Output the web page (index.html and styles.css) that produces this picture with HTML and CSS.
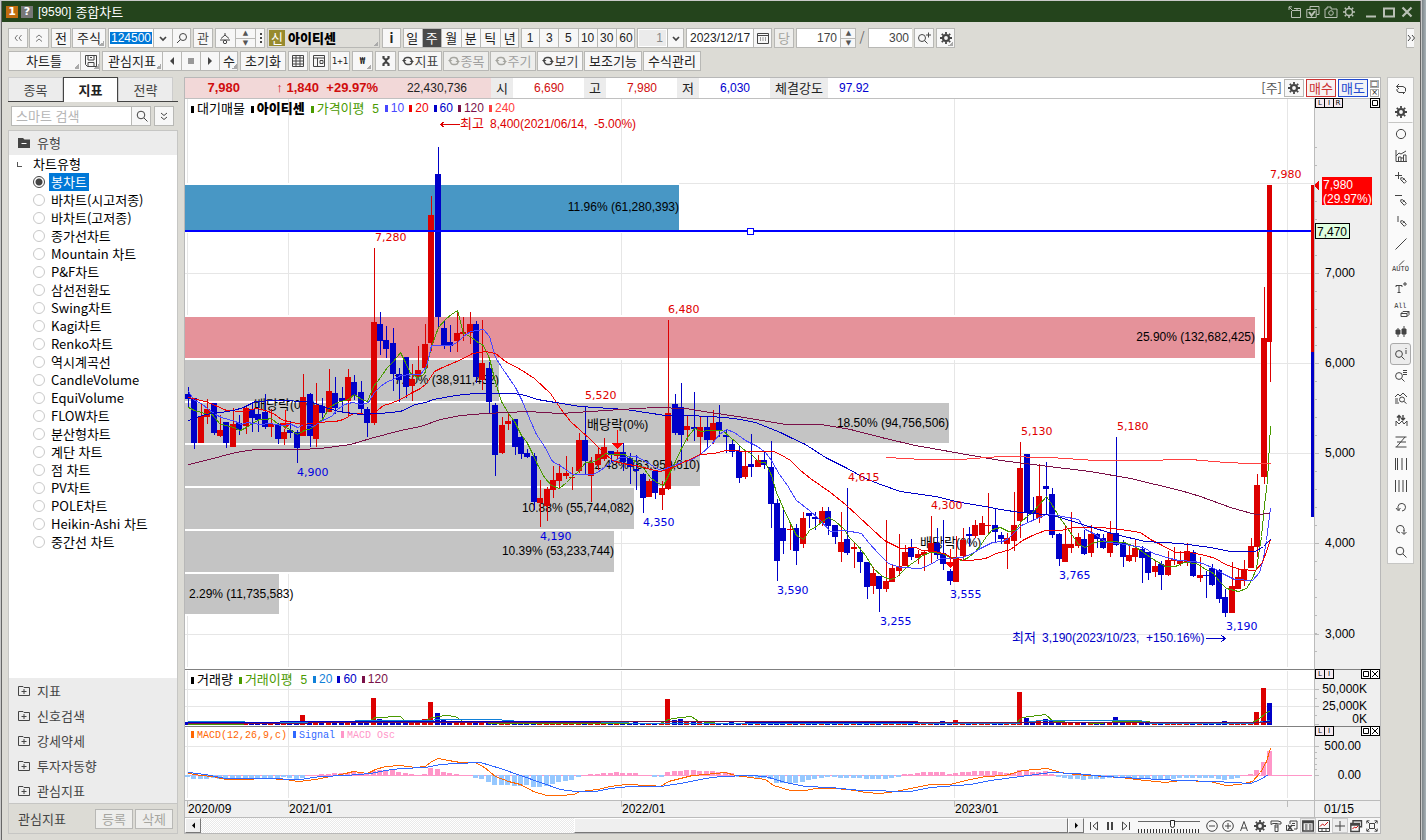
FILE: index.html
```html
<!DOCTYPE html>
<html lang="ko">
<head>
<meta charset="utf-8">
<title>[9590] 종합차트</title>
<link rel="stylesheet" href="styles.css">
</head>
<body>
<svg class="sprite" aria-hidden="true">
  <symbol id="gear" viewBox="0 0 12 12"><circle cx="6" cy="6" r="3" fill="none" stroke="currentColor" stroke-width="2.2"/><path d="M6 0v2M6 10v2M0 6h2M10 6h2M1.8 1.8l1.3 1.3M8.9 8.9l1.3 1.3M1.8 10.2l1.3-1.3M8.9 3.1l1.3-1.3" stroke="currentColor" stroke-width="1.8"/></symbol>
  <symbol id="gear-thin" viewBox="0 0 12 12"><circle cx="6" cy="6" r="3.5" fill="none" stroke="currentColor" stroke-width="1.4"/><path d="M6 0v2M6 10v2M0 6h2M10 6h2M1.8 1.8l1.3 1.3M8.9 8.9l1.3 1.3M1.8 10.2l1.3-1.3M8.9 3.1l1.3-1.3" stroke="currentColor" stroke-width="1.6"/></symbol>
  <symbol id="find" viewBox="0 0 12 12"><circle cx="5" cy="5" r="3.8"/><path d="M8 8l3.5 3.5"/></symbol>
  <symbol id="find-l" viewBox="0 0 12 12"><circle cx="7" cy="5" r="3.5"/><path d="M4.500 7.500L1 11"/></symbol>
  <symbol id="find-plus" viewBox="0 0 14 12"><circle cx="5" cy="6" r="3.500"/><path d="M7.500 8.500l3 3M9 3h5M11.500 .5v5"/></symbol>
  <symbol id="down" viewBox="0 0 12 12"><path d="M3 5l3 3 3-3" stroke-width="1.700"/></symbol>
  <symbol id="dleft" viewBox="0 0 12 12"><path d="M5.500 3L3 6l2.500 3M9.500 3L7 6l2.500 3"/></symbol>
  <symbol id="dright" viewBox="0 0 12 12"><path d="M3 3l2.500 3L3 9M7 3l2.500 3L7 9"/></symbol>
  <symbol id="dup" viewBox="0 0 12 12"><path d="M3 5.500L6 3l3 2.500M3 9.500L6 7l3 2.500"/></symbol>
  <symbol id="ddown" viewBox="0 0 12 12"><path d="M3 3l3 2.500L9 3M3 7l3 2.500L9 7"/></symbol>
  <symbol id="sync" viewBox="0 0 12 12"><path d="M2 6V4.500a3 3 0 0 1 3-2h1.500a3 3 0 0 1 3 2.500M10 6v1.500a3 3 0 0 1-3 2H5.500a3 3 0 0 1-3-2.500" stroke-width="1.500"/><path d="M0 5h4.500L2 7.500zM7.500 7H12L9.800 4.500z" fill="currentColor" stroke="none"/></symbol>
  <symbol id="save" viewBox="0 0 12 12"><path d="M.5 .5h11v11H2.500l-2-2zM3 .5v4.500h6V.5M3 11.500V7.500h6v4M5 2.500h2"/></symbol>
  <symbol id="grid" viewBox="0 0 12 12"><path d="M.5 .5h11v11H.5zM.5 3h11M.5 6h11M.5 9h11M4 .5v11M8 .5v11"/></symbol>
  <symbol id="layout" viewBox="0 0 12 12"><path d="M.5 .5h11v11H.5zM.5 3h11M4.500 3v8.500M7 5.500h3v3H7z"/></symbol>
  <symbol id="left" viewBox="0 0 12 12"><path d="M8 2v8L4 6z" fill="currentColor" stroke="none"/></symbol>
  <symbol id="right" viewBox="0 0 12 12"><path d="M4 2v8l4-4z" fill="currentColor" stroke="none"/></symbol>
  <symbol id="stop" viewBox="0 0 12 12"><path d="M3 3h6v6H3z" fill="currentColor" stroke="none"/></symbol>
  <symbol id="calendar" viewBox="0 0 12 12"><path d="M.5 1.500h11v10H.5zM.5 3.500h11M3 6h1M5.500 6h1M8 6h1M3 8h1M5.500 8h1M8 8h1"/></symbol>
  <symbol id="tool" viewBox="0 0 12 12"><path d="M3.500 1v2l2.500 2 2.500-2V1M6 5v2M3.500 11V9L6 7l2.500 2v2" stroke-width="2.200"/></symbol>
  <symbol id="folder-plus" viewBox="0 0 12 12"><path d="M.5 10.500V1.500H5l1 1h5.500v8zM3.500 6.500h5M6 4v5"/></symbol>
  <symbol id="folder-minus" viewBox="0 0 12 12"><path d="M0 1h5l1.500 1.500H12V11H0z" fill="currentColor" stroke="none"/><path d="M3.500 6.500h5" stroke="#fff"/></symbol>
  <symbol id="person" viewBox="0 0 12 12"><path d="M6 1v2L2 6.500M6 3l4 3.500M1 8h10"/><circle cx="6" cy="10" r="1.700"/></symbol>
  <symbol id="pencil" viewBox="0 0 7 7"><path d="M.8.8h2l3.500 3.500-2 2L.8 2.800zM2.500 3l2-1.500"/></symbol>
</svg>

<main class="window">
  <header class="titlebar">
    <span class="badge badge-num">1</span><button class="badge badge-help" type="button">?</button>
    <h1><span class="num">[9590]</span> 종합차트</h1>
    <div class="window-tools">
      <button type="button" aria-label="팝업"><svg class="ic" viewBox="0 0 14 12"><path d="M3.500 5v6.500h9V2.500H6M4 4.500h9M9 2.500v2M1 1l4 4M1 4V.8h3" /></svg></button>
      <button type="button" aria-label="묶음"><svg class="ic" viewBox="0 0 14 12"><path d="M4 3V.5h9v8h-2.500M.8 3.500h9.400v8H.8z"/><path d="M3 6l2.500 3.500L9 5" stroke-width="2"/></svg></button>
      <button type="button" aria-label="캡처"><svg class="ic" viewBox="0 0 14 12"><path d="M1 3h2V1h4v2h6v8.500H1z"/><circle cx="7" cy="7" r="2.300"/></svg></button>
      <button type="button" aria-label="설정"><svg class="ic"><use href="#gear-thin"/></svg></button>
      <button type="button" aria-label="최소화"><svg class="ic" viewBox="0 0 12 12"><path d="M1 10.500h10" stroke-width="2"/></svg></button>
      <button type="button" aria-label="최대화"><svg class="ic" viewBox="0 0 12 12"><path d="M1 2.500h10v8H1z" stroke-width="2"/></svg></button>
      <button type="button" aria-label="닫기"><svg class="ic" viewBox="0 0 12 12"><path d="M1.500 1.500l9 9M10.500 1.500l-9 9" stroke-width="2.200"/></svg></button>
    </div>
  </header>

  <div class="toolbars">
    <div class="toolbar">
      <div class="spaced"><button class="btn w20" type="button" aria-label="처음"><svg class="ic dim"><use href="#dleft"/></svg></button><button class="btn w20" type="button" aria-label="접기"><svg class="ic dim"><use href="#dup"/></svg></button></div>
      <div class="spaced"><button class="btn w20" type="button">전</button><button class="btn w34 drop" type="button">주식</button></div>
      <div class="group"><input class="w45 num code" type="text" value="124500" aria-label="종목코드"><button class="w19" type="button" aria-label="목록"><svg class="ic"><use href="#down"/></svg></button><button class="w19" type="button" aria-label="종목검색"><svg class="ic"><use href="#find-l"/></svg></button></div>
      <button class="btn w20 soft" type="button">관</button>
      <div class="group"><button class="w20" type="button" aria-label="그룹"><svg class="ic"><use href="#person"/></svg></button><span class="spin w20"><button type="button" aria-label="이전 종목">▲</button><button type="button" aria-label="다음 종목">▼</button></span><button class="w10" type="button" aria-label="더보기"><svg class="ic" viewBox="0 0 12 12"><path d="M6 1v2M6 5v2M6 9v2" stroke-width="2"/></svg></button></div>
      <button class="stock drop" type="button"><span class="tag">신</span><b>아이티센</b></button>
      <button class="btn w19" type="button"><b>i</b></button>
      <div class="group even period"><button type="button">일</button><button class="on" type="button">주</button><button type="button">월</button><button type="button">분</button><button type="button">틱</button><button type="button">년</button></div>
      <div class="group even minutes num"><button type="button">1</button><button type="button">3</button><button type="button">5</button><button type="button">10</button><button type="button">30</button><button type="button">60</button></div>
      <div class="group"><input class="w30 num end off" type="text" value="1" aria-label="주기값"><button class="w17" type="button" aria-label="주기 목록"><svg class="ic"><use href="#down"/></svg></button></div>
      <div class="group"><input class="w67 num" type="text" value="2023/12/17" aria-label="날짜"><button class="w19" type="button" aria-label="달력"><svg class="ic"><use href="#calendar"/></svg></button></div>
      <button class="btn w20 flat" type="button">당</button>
      <div class="group"><input class="w44 num end" type="text" value="170" aria-label="표시 봉 수"><span class="spin w16"><button type="button" aria-label="증가">▲</button><button type="button" aria-label="감소">▼</button></span></div>
      <span class="slash">/</span>
      <div class="group"><input class="w44 num end" type="text" value="300" aria-label="전체 봉 수"></div>
      <button class="btn w20" type="button" aria-label="확대"><svg class="ic wide" viewBox="0 0 14 12"><use href="#find-plus"/></svg></button>
      <button class="btn w19 drop" type="button" aria-label="설정"><svg class="ic"><use href="#gear"/></svg></button>
      <button class="btn more" type="button" aria-label="더보기"><svg class="ic"><use href="#dright"/></svg></button>
    </div>
    <div class="toolbar">
      <div class="group"><button class="w72 drop" type="button">차트틀</button><button class="w20 drop" type="button" aria-label="저장"><svg class="ic"><use href="#save"/></svg></button></div>
      <div class="group"><button class="w60 drop" type="button">관심지표</button><button class="w19" type="button" aria-label="이전"><svg class="ic"><use href="#left"/></svg></button><button class="w19" type="button" aria-label="정지"><svg class="ic faded"><use href="#stop"/></svg></button><button class="w19" type="button" aria-label="다음"><svg class="ic"><use href="#right"/></svg></button><button class="w19 drop" type="button">수</button></div>
      <button class="btn w46" type="button">초기화</button>
      <div class="spaced"><button class="btn w20" type="button" aria-label="표"><svg class="ic"><use href="#grid"/></svg></button><button class="btn w20" type="button" aria-label="배치"><svg class="ic"><use href="#layout"/></svg></button><button class="btn w20 tiny" type="button">1+1</button></div>
      <button class="btn w21 drop tiny" type="button"><b>₩</b></button>
      <button class="btn w21" type="button" aria-label="도구"><svg class="ic"><use href="#tool"/></svg></button>
      <div class="spaced"><button class="btn w45 sync" type="button"><svg class="ic"><use href="#sync"/></svg>지표</button><button class="btn w46 sync flat" type="button"><svg class="ic"><use href="#sync"/></svg>종목</button><button class="btn w46 sync flat" type="button"><svg class="ic"><use href="#sync"/></svg>주기</button><button class="btn w46 sync" type="button"><svg class="ic"><use href="#sync"/></svg>보기</button><button class="btn w58" type="button">보조기능</button><button class="btn w58" type="button">수식관리</button></div>
    </div>
  </div>

  <div class="workspace">
    <aside class="sidebar">
      <nav class="tabs"><button type="button">종목</button><button class="active" type="button">지표</button><button type="button">전략</button></nav>
      <div class="search"><div class="group"><input type="text" placeholder="스마트 검색" aria-label="스마트 검색"><button class="w20" type="button" aria-label="검색"><svg class="ic"><use href="#find"/></svg></button></div><button class="btn w20" type="button" aria-label="펼치기"><svg class="ic"><use href="#ddown"/></svg></button></div>
      <div class="panel">
        <button class="section head" type="button"><svg class="ic"><use href="#folder-minus"/></svg>유형</button>
        <fieldset class="types">
          <legend><i class="elbow"></i>차트유형</legend>
          <label><input type="radio" name="type" checked><span>봉차트</span></label>
          <label><input type="radio" name="type"><span>바차트(시고저종)</span></label>
          <label><input type="radio" name="type"><span>바차트(고저종)</span></label>
          <label><input type="radio" name="type"><span>종가선차트</span></label>
          <label><input type="radio" name="type"><span>Mountain 차트</span></label>
          <label><input type="radio" name="type"><span>P&amp;F차트</span></label>
          <label><input type="radio" name="type"><span>삼선전환도</span></label>
          <label><input type="radio" name="type"><span>Swing차트</span></label>
          <label><input type="radio" name="type"><span>Kagi차트</span></label>
          <label><input type="radio" name="type"><span>Renko차트</span></label>
          <label><input type="radio" name="type"><span>역시계곡선</span></label>
          <label><input type="radio" name="type"><span>CandleVolume</span></label>
          <label><input type="radio" name="type"><span>EquiVolume</span></label>
          <label><input type="radio" name="type"><span>FLOW차트</span></label>
          <label><input type="radio" name="type"><span>분산형차트</span></label>
          <label><input type="radio" name="type"><span>계단 차트</span></label>
          <label><input type="radio" name="type"><span>점 차트</span></label>
          <label><input type="radio" name="type"><span>PV차트</span></label>
          <label><input type="radio" name="type"><span>POLE차트</span></label>
          <label><input type="radio" name="type"><span>Heikin-Ashi 차트</span></label>
          <label><input type="radio" name="type"><span>중간선 차트</span></label>
        </fieldset>
        <button class="section" type="button"><svg class="ic"><use href="#folder-plus"/></svg>지표</button>
        <button class="section" type="button"><svg class="ic"><use href="#folder-plus"/></svg>신호검색</button>
        <button class="section" type="button"><svg class="ic"><use href="#folder-plus"/></svg>강세약세</button>
        <button class="section" type="button"><svg class="ic"><use href="#folder-plus"/></svg>투자자동향</button>
        <button class="section" type="button"><svg class="ic"><use href="#folder-plus"/></svg>관심지표</button>
        <footer class="favorites"><span>관심지표</span><button class="btn flat" type="button">등록</button><button class="btn flat" type="button">삭제</button></footer>
      </div>
    </aside>

    <section class="chart">
      <div class="quote">
        <div class="now num"><b>7,980</b><b>↑ 1,840</b><b>+29.97%</b><span>22,430,736</span></div>
        <span class="key">시</span><span class="val up num">6,690</span>
        <span class="key">고</span><span class="val up num">7,980</span>
        <span class="key">저</span><span class="val dn num">6,030</span>
        <span class="key wide">체결강도</span><span class="val dn num">97.92</span>
        <span class="unit">[주]</span>
        <button class="btn w20" type="button" aria-label="설정"><svg class="ic"><use href="#gear"/></svg></button>
        <button class="trade buy" type="button">매수</button><button class="trade sell" type="button">매도</button>
        <span class="mini"><button type="button" aria-label="확대">□</button><button type="button" aria-label="닫기">×</button></span>
      </div>
      <div class="pane price">
        <div class="plot"><svg id="price"></svg>
          <div class="legend"><span class="k ko">대기매물</span><span class="k ko"><b>아이티센</b></span><span class="c5 ko">가격이평 <i>5</i></span><span class="c10">10</span><span class="c20">20</span><span class="c60">60</span><span class="c120">120</span><span class="c240">240</span></div>
        </div>
        <div class="axis"><svg id="price-axis"></svg><div class="caps"><button type="button">L</button><button type="button">I</button><button type="button">R</button></div><div class="caps end"><button type="button" aria-label="확대"><svg class="ic" viewBox="0 0 8 8"><path d="M1.500 1.500h5v5h-5z"/></svg></button></div></div>
      </div>
      <div class="pane volume">
        <div class="plot"><svg id="volume"></svg>
          <div class="legend"><span class="k ko">거래량</span><span class="c5 ko">거래이평 <i>5</i></span><span class="v20">20</span><span class="c60">60</span><span class="c120">120</span></div>
        </div>
        <div class="axis"><svg id="volume-axis"></svg><div class="caps"><button type="button">L</button><button type="button">I</button></div><div class="caps end"><button type="button" aria-label="확대"><svg class="ic" viewBox="0 0 8 8"><path d="M1.500 1.500h5v5h-5z"/></svg></button><button type="button" aria-label="닫기"><svg class="ic" viewBox="0 0 8 8"><path d="M1 1l6 6M7 1L1 7"/></svg></button></div></div>
      </div>
      <div class="pane macd">
        <div class="plot"><svg id="macd"></svg>
          <div class="legend"><span class="m1">MACD(12,26,9,c)</span><span class="m2">Signal</span><span class="m3">MACD Osc</span></div>
        </div>
        <div class="axis"><svg id="macd-axis"></svg><div class="caps"><button type="button">L</button><button type="button">I</button></div><div class="caps end"><button type="button" aria-label="확대"><svg class="ic" viewBox="0 0 8 8"><path d="M1.500 1.500h5v5h-5z"/></svg></button><button type="button" aria-label="닫기"><svg class="ic" viewBox="0 0 8 8"><path d="M1 1l6 6M7 1L1 7"/></svg></button></div></div>
      </div>
      <div class="pane dates"><div class="plot"><svg id="dates"></svg></div><div class="axis num">01/15</div></div>
      <div class="bottom">
        <div class="scroll"><button type="button" aria-label="왼쪽"><svg class="ic"><use href="#left"/></svg></button><div class="track"><div class="thumb"></div></div><button type="button" aria-label="오른쪽"><svg class="ic"><use href="#right"/></svg></button></div>
        <div class="player">
          <button type="button" aria-label="처음으로"><svg class="ic" viewBox="0 0 12 12"><path d="M2.500 2v8M9.500 2v8L5 6z"/></svg></button>
          <button type="button" aria-label="일시정지"><svg class="ic" viewBox="0 0 12 12"><path d="M4 2v8M8 2v8" stroke-width="2"/></svg></button>
          <button type="button" aria-label="끝으로"><svg class="ic" viewBox="0 0 12 12"><path d="M9.500 2v8M2.500 2v8L7 6z"/></svg></button>
        </div>
        <input class="speed" type="range" min="0" max="18" value="10" aria-label="속도">
        <div class="player">
          <button type="button" aria-label="축소"><svg class="ic" viewBox="0 0 12 12"><circle cx="6" cy="6" r="5.300"/><path d="M3 6h6"/></svg></button>
          <button type="button" aria-label="확대"><svg class="ic" viewBox="0 0 12 12"><circle cx="6" cy="6" r="5.300"/><path d="M3 6h6M6 3v6"/></svg></button>
          <button type="button" aria-label="글자"><svg class="ic" viewBox="0 0 12 12"><path d="M2.500 11L6 1.500 9.500 11M3.500 8h5"/></svg></button>
          <button type="button" aria-label="설정"><svg class="ic"><use href="#gear"/></svg></button>
          <button type="button" aria-label="도구"><svg class="ic" viewBox="0 0 12 12"><path d="M1 1h7l3 1v2H8L7 3.500H3L1 4.500zM5 5h3v2H5zM5 7v4.500h3V7"/></svg></button>
          <button type="button" aria-label="편집"><svg class="ic" viewBox="0 0 12 12"><path d="M4 4V1h7v8H8M6 3.500h3M6 5.500h3M.5 5v5.500h7"/><path d="M2 5l4 5M6 5l-4 5" stroke-width="1.600"/></svg></button>
          <button class="on" type="button" aria-label="정보"><svg class="ic" viewBox="0 0 12 12"><path d="M.8 1h10.500v10H.8zM1 2.500h10" stroke-width="1.500"/><path d="M3 5h2.500M3 7h2.500M3 9h2.500M7 5h2.500M7 7h2.500M7 9h2.500"/></svg></button>
          <button type="button" aria-label="차트"><svg class="ic" viewBox="0 0 12 12"><path d="M.5 .5h11v11H.5z"/><path d="M2 6.500L4.500 4l2 1.500L10 2" stroke="#c11"/><path d="M.5 8.500h11M4 8.500v3M8 8.500v3"/></svg></button>
          <button class="on" type="button" aria-label="십자선"><svg class="ic" viewBox="0 0 12 12"><path d="M6 1v10M1 6h10"/></svg></button>
          <button type="button" aria-label="복사"><svg class="ic" viewBox="0 0 12 12"><path d="M3 3V.8h8.500v6H9M.8 3.500h8.500v8H.8zM1 5h8" stroke-width="1.400"/><path d="M2.500 9l2-2 1.500 1 2-2" stroke="#c11"/></svg></button>
          <button type="button" aria-label="전체화면"><svg class="ic" viewBox="0 0 12 12"><path d="M.8 3.500V.8h2.700M8.500.8h2.700v2.700M11.200 8.500v2.700H8.500M3.500 11.200H.8V8.500M3.500 3.500h5v5h-5zM1 1l2.500 2.500M11 1L8.500 3.500M1 11l2.500-2.500M11 11L8.500 8.500"/></svg></button>
        </div>
      </div>
    </section>

    <aside class="drawbar">
      <button type="button" aria-label="전환"><svg class="ic" viewBox="0 0 12 12"><path d="M4 1L1.500 3.500 4 6M1.500 3.500H8l2.500 1.500v3M8 11l2.500-2.500M2 6v2l2 1.500h6"/></svg></button>
      <button class="last" type="button" aria-label="설정"><svg class="ic"><use href="#gear"/></svg></button>
      <button type="button" aria-label="원"><svg class="ic" viewBox="0 0 12 12"><circle cx="6" cy="6" r="4.600"/></svg></button>
      <button type="button" aria-label="분석"><svg class="ic" viewBox="0 0 12 12"><path d="M1 0v11.500h11M1 6l3-3 2 1 5-3M3.500 11V7H6v4M6 8h2.500v3M8.500 11V5H11v6"/></svg></button>
      <button type="button" aria-label="십자 그리기"><svg class="ic" viewBox="0 0 12 12"><path d="M0 3.500h7M3.500 0v7"/><use href="#pencil" x="5" y="5" width="7" height="7"/></svg></button>
      <button type="button" aria-label="수평선"><svg class="ic" viewBox="0 0 12 12"><path d="M0 1.500h7"/><use href="#pencil" x="5" y="5" width="7" height="7"/></svg></button>
      <button type="button" aria-label="수직선"><svg class="ic" viewBox="0 0 12 12"><path d="M3 0v6"/><use href="#pencil" x="5" y="4" width="7" height="7"/></svg></button>
      <button type="button" aria-label="추세선"><svg class="ic" viewBox="0 0 12 12"><path d="M.5 11.500l11-11"/></svg></button>
      <button class="auto" type="button"><svg class="ic" viewBox="0 0 12 5"><path d="M4 5l5-5"/></svg>AUTO</button>
      <button type="button" aria-label="글자"><svg class="ic" viewBox="0 0 12 12"><path d="M1 5V3.500h6V5M4 3.500v7M2.500 10.500h3M8 2h4M10 0v4"/></svg></button>
      <button class="auto all" type="button">All<svg class="ic" viewBox="0 0 12 7"><path d="M3 3l2-2h6v3L9 6H3zM3 3h6v3M9 3l2-2"/></svg></button>
      <button type="button" aria-label="봉"><svg class="ic" viewBox="0 0 12 12"><path d="M1 4h4v4H1zM7 3h4v5H7z" fill="currentColor"/><path d="M3 2v9M9 0v11"/></svg></button>
      <button class="on" type="button" aria-label="정보 조회"><svg class="ic" viewBox="0 0 12 12"><circle cx="4" cy="6" r="3.400"/><path d="M6.500 8.500l3 3M11 0v1M11 2v4"/></svg></button>
      <button type="button" aria-label="목록 조회"><svg class="ic" viewBox="0 0 12 12"><circle cx="4" cy="6" r="3.400"/><path d="M6.500 8.500l3 3M8 .5h4M8 2.500h4M8 4.500h4"/></svg></button>
      <button type="button" aria-label="패턴"><svg class="ic" viewBox="0 0 12 12"><path d="M0 5l3-3 2 2 3-3 4 4M0 7h3M0 9h3M0 11h4"/><circle cx="7" cy="7.500" r="2.500"/><path d="M9 9.500l2.500 2"/></svg></button>
      <button type="button" aria-label="매매 신호"><svg class="ic" viewBox="0 0 12 12"><path d="M1 12V7l3 3 3-3 2 3 3-3v5"/><path d="M4 7V2M2 3.500L4 1.500l2 2M8 1v5M6 4l2 2 2-2" stroke-width="1.400"/></svg></button>
      <button type="button" aria-label="피보나치"><svg class="ic" viewBox="0 0 12 12"><path d="M.5 1h11M2 6h9M.5 11h11M10 1L1.500 11"/></svg></button>
      <button type="button" aria-label="시간대"><svg class="ic" viewBox="0 0 12 12"><path d="M.5 0v12M2.500 0v12M7 0v12M11.500 0v12"/></svg></button>
      <button type="button" aria-label="등간격"><svg class="ic" viewBox="0 0 12 12"><path d="M.5 0v12M4 0v12M8 0v12M11.500 0v12"/></svg></button>
      <button type="button" aria-label="되돌리기"><svg class="ic" viewBox="0 0 12 12"><path d="M3 7V4.500a3.800 3.800 0 1 1 4 4.500M1 6l2 2.500L5.500 6M3 8h2"/></svg></button>
      <button type="button" aria-label="다시하기"><svg class="ic" viewBox="0 0 12 12"><path d="M9 7V4.500A3.800 3.800 0 1 0 5 9M6.500 8L9 10.500 11.500 8M9 6v4"/></svg></button>
      <button type="button" aria-label="돋보기"><svg class="ic"><use href="#find"/></svg></button>
    </aside>
  </div>
</main>
<script src="chart.js"></script>
</body>
</html>
```

FILE: styles.css
```css
* { box-sizing: border-box; }
body { margin: 0; padding: 1px 5px 0 1px; min-height: 100vh; display: flex; background: linear-gradient(90deg, #c9c9c9, #c9c9c9 calc(100% - 4px), #7b8387 calc(100% - 4px), #a9b3b8); font: 13px/18px "Noto Sans CJK KR", "Liberation Sans", sans-serif; color: #222; }
button, input { font: inherit; color: inherit; margin: 0; padding: 0; border: 0; background: none; border-radius: 0; min-width: 0; }
button { display: flex; align-items: center; justify-content: center; white-space: nowrap; }
.sprite { position: absolute; width: 0; height: 0; }
.num { font-family: "Liberation Sans", sans-serif; font-size: 12px; }
.ic { width: 12px; height: 12px; flex: none; fill: none; stroke: currentColor; stroke-width: 1; color: #444; overflow: visible; }
.ic.wide { width: 14px; }
.ic.dim { color: #777; }
.ic.faded { color: #999; }
.window { flex: 1; min-width: 0; display: flex; flex-direction: column; background: #dcdbd5; border-left: 1px solid #666; border-right: 1px solid #666; }

.titlebar { height: 21px; display: flex; align-items: center; padding: 0 6px 0 4px; background: #24441c; color: #fff; }
.titlebar h1 { margin: 0 0 0 2px; font-size: 13px; line-height: 18px; font-weight: 400; display: flex; gap: 4px; }
.badge { width: 12px; height: 12px; margin-right: 3px; font: bold 11px/12px "DejaVu Sans", sans-serif; text-align: center; background: #c16c10; color: #fff; }
.badge-help { background: #777; }
.window-tools { margin-left: auto; display: flex; gap: 4px; }
.window-tools .ic { color: #b9c0b5; width: 14px; }
.window-tools button:nth-child(5) { margin-left: 4px; }

.toolbars { padding: 6px; display: flex; flex-direction: column; gap: 3px; }
.toolbar { display: flex; gap: 2px; height: 20px; }
.spaced { display: flex; gap: 1px; }
.btn, .group { border: 1px solid #b8b8b5; background: #f7f7f7; height: 20px; flex: none; }
.group { display: flex; }
.group > * { border-left: 1px solid #b8b8b5; height: 18px; flex: none; }
.group > :first-child { border-left: 0; margin-left: -1px; }
.group > :last-child { margin-right: -1px; }
.group > input { background: #fff; padding: 0 3px; }
.group > input:first-child { margin-left: 0; }
.drop { background-image: linear-gradient(135deg, transparent 50%, #aaa 50%); background-size: 5px 5px; background-position: right 1px bottom 1px; background-repeat: no-repeat; }
.w10 { width: 10px; } .w16 { width: 16px; } .w17 { width: 17px; } .w19 { width: 19px; } .w20 { width: 20px; } .w21 { width: 21px; }
.w30 { width: 29px; } .w34 { width: 34px; } .w44 { width: 43px; } .w45 { width: 44px; } .w46 { width: 46px; } .w58 { width: 58px; }
.w60 { width: 60px; } .w67 { width: 66px; } .w72 { width: 72px; }
.group .code { padding: 0 0 0 2px; color: #fff; background: linear-gradient(#0078d7, #0078d7) 1px 3px / 42px 12px no-repeat #fff; }
.end { text-align: right; color: #444; }
.group .off { background: #ebebeb; color: #888; border: 1px solid #fff; }
.even > * { flex: 1; }
.period { width: 116px; }
.minutes { width: 114px; }
.on { background: #4a4a4a; color: #fff; }
.soft { color: #555; }
.flat { color: #a5a59f; background: #eeeeec; }
.flat .ic { color: #a5a59f; }
.tiny { font-family: "DejaVu Sans Mono", monospace; font-size: 9px; }
.sync .ic { margin-right: 1px; width: 12px; }
.sync { color: #444; }
.sync.flat { color: #a0a0a0; }
.spin { display: flex; flex-direction: column; }
.spin button { flex: 1; font: 7px/8px "DejaVu Sans", sans-serif; color: #555; }
.spin button + button { border-top: 1px solid #b8b8b5; }
.stock { width: 113px; justify-content: flex-start; gap: 3px; background-color: #dfded9; border: 1px solid #b8b8b5; padding-left: 1px; }
.stock b { font-weight: 900; color: #000; }
.tag { width: 16px; height: 16px; line-height: 16px; background: #978a2e; color: #fff; }
.slash { width: 8px; text-align: center; color: #666; }
.more { width: 8px; margin-left: auto; border-right: 0; }

.workspace { flex: 1; display: flex; padding: 0 6px 6px 6px; min-height: 0; }
.sidebar { width: 170px; flex: none; display: flex; flex-direction: column; }
.tabs { display: flex; height: 25px; border-bottom: 1px solid #444; padding-right: 5px; }
.tabs button { flex: 1; background: #ececec; border: 1px solid #ccc; border-bottom: 0; color: #444; height: 24px; }
.tabs .active { background: #fff; border-color: #444; font-weight: 700; color: #222; height: 25px; }
.search { display: flex; gap: 3px; padding: 4px 4px 4px 3px; }
.search .group { flex: 1; min-width: 0; }
.search .group input { flex: 1; width: 0; padding: 0 4px; }
.search input::placeholder { color: #b5b5b5; }
.panel { flex: 1; display: flex; flex-direction: column; border: 1px solid #c6c6c4; background: #fff; }
.section { height: 25px; flex: none; justify-content: flex-start; gap: 7px; padding-left: 9px; background: #ececec; color: #444; }
.head { height: 24px; }
.types { flex: 1; border: 0; margin: 0; padding: 0 0 0 24px; min-width: 0; color: #000; }
.types legend { padding: 0; display: flex; line-height: 18px; align-items: center; }
.elbow { width: 5px; height: 5px; margin: 0 11px 0 -16px; border-left: 1px solid #555; border-bottom: 1px solid #555; }
.types label { display: flex; align-items: center; gap: 4px; height: 18px; }
.types span { padding: 0 2px; line-height: 18px; }
.types input { appearance: none; width: 12px; height: 12px; border: 1px solid #c8c8c8; border-radius: 50%; }
.types input:checked { border-color: #444; background: radial-gradient(#444 0 3px, #fff 4px); }
.types input:checked + span { background: #0078d7; color: #fff; }
.favorites { height: 30px; display: flex; align-items: center; gap: 2px; padding: 0 4px 0 9px; border-top: 1px solid #c6c6c4; background: #dcdbd5; color: #444; }
.favorites span { margin-right: auto; }
.favorites .btn { width: 38px; }

.chart { flex: 1; min-width: 0; margin-left: 6px; display: flex; flex-direction: column; border: 1px solid #b8b8b8; background: #fff; }
.quote { height: 21px; display: flex; align-items: center; gap: 2px; border-bottom: 1px solid #c0c0c0; line-height: 20px; }
.now { width: 306px; display: grid; grid-template-columns: 55px 79px 59px 89px; background: #f2d8d8; text-align: right; }
.now b { color: #d00d0d; font-size: 13px; }
.key { width: 22px; margin-left: -2px; background: #ececec; text-align: center; }
.key.wide { width: 58px; }
.val { width: 71px; margin-left: -2px; padding-right: 20px; text-align: right; }
.key.wide + .val { padding-right: 30px; }
.up { color: #d00d0d; }
.dn { color: #0000d0; }
.unit { margin-left: auto; color: #555; }
.quote .btn { height: 18px; }
.trade { width: 30px; height: 18px; border: 1px solid #c33; color: #c33; background: #f7f2f2; }
.sell { border-color: #2149cf; color: #2149cf; background: #f2f3f7; }
.mini { width: 9px; display: flex; flex-direction: column; gap: 1px; margin-right: 1px; }
.mini button { height: 8px; border: 1px solid #aaa; font: 8px/6px "DejaVu Sans", sans-serif; }
.pane { display: flex; border-top: 1px solid #808080; }
.price { flex: 1; border-top: 0; min-height: 0; }
.volume { height: 57px; }
.macd { height: 74px; }
.dates { height: 17px; border-color: #bbb; background: #efefef; }
.plot { flex: 1; min-width: 0; position: relative; }
.plot > svg, .axis > svg { display: block; width: 100%; height: 100%; shape-rendering: crispEdges; overflow: hidden; }
.axis { width: 66px; flex: none; position: relative; background: #efefef; border-left: 1px solid #bbb; }
.dates .axis { padding-left: 9px; line-height: 17px; color: #000; }
svg text { font: 12px "Liberation Sans", sans-serif; white-space: pre; }
svg .ko { font: 13px "Noto Sans CJK KR", sans-serif; }
svg .mark { font: 11px "DejaVu Sans", sans-serif; }
.legend { position: absolute; top: 0; left: 6px; display: flex; gap: 5px; font: 12px/18px "Liberation Sans", sans-serif; }
.legend span::before { content: ""; display: inline-block; width: 3px; height: 7px; margin-right: 3px; background: currentColor; }
.legend .ko { font-family: "Noto Sans CJK KR", sans-serif; font-size: 13px; margin-right: 1px; }
.legend b { font-weight: 900; }
.legend i { font: 12px "Liberation Sans", sans-serif; margin-left: 4px; }
.k { color: #000; } .c5 { color: #4a9a00; } .c10 { color: #4848ff; } .c20 { color: #f00000; } .c60 { color: #0000c8; }
.c120 { color: #7a1048; } .c240 { color: #ff4040; } .v20 { color: #1080d8; } .m1 { color: #ff6600; } .m2 { color: #2f68ff; } .m3 { color: #ff96c8; }
.macd .legend { font-family: "Liberation Mono", monospace; font-size: 10px; gap: 6px; }
.caps { position: absolute; top: -1px; left: 0; display: flex; }
.caps.end { left: auto; right: 0; }
.caps button { width: 10px; height: 10px; border: 1px solid #000; margin-right: -1px; font: 7px/8px "DejaVu Sans", sans-serif; color: #000; background: #f6eaf0; }
.caps.end button { margin-right: 0; margin-left: -1px; background: #fff; }
.caps .ic { width: 8px; height: 8px; color: #000; }

.bottom { height: 16px; display: flex; border-top: 1px solid #bbb; background: #f7f7f7; }
.scroll { flex: 1; display: flex; }
.scroll button, .thumb { background: #efefef; border: 1px solid; border-color: #fff #777 #777 #fff; }
.scroll button { width: 16px; }
.scroll .ic { color: #000; width: 9px; height: 9px; }
.track { flex: 1; background: repeating-conic-gradient(#fff 0 25%, #e9e9e9 0 50%) 0 0 / 2px 2px; display: flex; justify-content: flex-end; }
.thumb { width: 57%; }
.player { display: flex; margin-left: 2px; }
.player button { width: 16px; }
.player .on { background: #eee; outline: 1px solid #ccc; outline-offset: -1px; }
.speed { appearance: none; width: 62px; margin: 0 2px 0 4px; background: linear-gradient(#666, #666) 0 3px / 100% 1px no-repeat, repeating-linear-gradient(90deg, #333 0 1px, transparent 1px 3px) 0 100% / 100% 4px no-repeat; }
.speed::-webkit-slider-thumb { appearance: none; width: 5px; height: 8px; margin-bottom: 4px; border: 1px solid #222; background: #fff; border-radius: 0 0 3px 3px; }

.drawbar { width: 27px; flex: none; align-self: flex-start; margin-left: 6px; border: 1px solid #c6c6c4; background: #fafafa; display: flex; flex-direction: column; }
.drawbar button { height: 22px; border: 1px solid transparent; }
.drawbar .last { border-bottom-color: #c6c6c4; height: 23px; }
.drawbar .on { margin: 0 2px; border: 1px solid #aaa; border-radius: 3px; background: #ececec; }
.auto { flex-direction: column; font: 7px/7px "DejaVu Sans Mono", monospace; color: #333; }
.auto .ic { height: 6px; }
.all .ic { margin-left: 6px; height: 8px; }
```

FILE: chart.js
```js
// Plot coordinates are those of the whole window; each pane shifts them by its own origin.
const NS = 'http://www.w3.org/2000/svg';
const RED = '#dc0000', BLUE = '#0000c8', GRID = '#e6e6e6';
const pane = (id, x, y) => {
  const g = document.createElementNS(NS, 'g');
  g.setAttribute('transform', `translate(${-x} ${-y})`);
  document.getElementById(id).append(g);
  return g;
};
const add = (g, tag, attrs, text) => {
  const e = document.createElementNS(NS, tag);
  for (const k in attrs) e.setAttribute(k, attrs[k]);
  if (text) e.textContent = text;
  g.append(e);
};
const box = (g, x, y, width, height, fill) => add(g, 'rect', { x, y, width, height, fill });
const line = (g, points, stroke) => add(g, 'polyline', { points, stroke, fill: 'none', transform: 'translate(.5 .5)' });
const text = (g, x, y, s, fill = '#000', anchor = 'start', cls = '') => add(g, 'text', { x, y, fill, 'text-anchor': anchor, class: cls }, s);
const barX = i => Math.round(188 + i * 6.402);
const YEARS = [187, 288, 621, 954, 1287];

// colour, high, body top, body bottom, low
const candles = `B387 394 399 408,B398 398 443 449,R404 416 443 443,R399 409 417 424,B403 403 433 435,R415 430 436 437,B422 422 443 448,R408 424 447 447,B415 423 430 435,R405 408 426 434
B402 409 418 432,B402 414 420 432,B394 412 427 429,R409 424 427 437,B423 424 439 444,R429 432 439 445,B421 430 433 438,B430 432 448 463,R374 397 436 436,B393 394 436 447
R383 405 439 447,B398 406 413 418,R369 391 412 412,B377 393 408 414,B387 398 401 412,R369 377 401 416,B375 382 396 400,B381 392 409 415,B407 409 423 437,R248 322 423 425
B312 324 341 355,B326 340 349 358,B328 343 374 391,B368 374 380 402,B357 357 387 398,R364 379 386 401,R346 370 377 378,R324 344 368 373,R196 215 343 351,B147 174 317 328
B320 328 345 349,B325 342 346 352,R313 333 341 352,R317 332 334 341,R312 324 333 344,B321 324 377 383,R320 363 380 390,B362 368 402 414,B403 405 455 476,R417 425 453 454
R412 421 424 430,B419 419 447 455,B435 437 454 459,B449 453 457 458,B453 456 502 510,R480 498 503 527,R487 489 506 521,R466 480 490 498,R464 473 481 488,R456 473 476 479
R467 477 478 490,R433 440 471 473,B406 440 461 474,R457 463 476 502,R447 454 465 470,R438 447 459 461,B451 451 455 462,R450 452 456 459,B443 452 462 471,B453 458 467 484
B455 469 471 490,B473 474 498 513,R479 481 497 497,B471 471 493 499,R481 488 495 510,R320 413 489 490,B394 404 433 435,B383 407 435 460,R416 426 430 441,B392 427 429 441
R416 427 437 455,B417 427 440 448,R410 423 440 444,B405 422 430 437,B430 435 437 453,B440 444 452 457,B445 451 478 483,R452 466 477 479,B434 464 467 477,R455 460 467 467
B451 460 465 469,B441 467 504 528,B499 503 561 581,B508 528 541 554,R525 529 530 550,B524 528 551 565,R512 518 544 548,B513 513 516 528,B512 517 519 530,R507 511 523 526
B507 511 526 535,B525 525 537 544,R512 542 552 562,B488 539 553 555,R543 547 549 568,B547 552 562 573,B562 562 587 599,R567 573 586 594,B576 576 589 612,R520 581 589 592
R565 568 582 582,R534 566 571 576,R545 552 566 566,B539 547 557 560,R550 554 558 564,R550 552 555 571,R516 543 552 563,B528 543 555 559,B520 553 564 570,B569 571 581 585
R536 557 582 582,R528 540 556 560,B527 534 536 546,R520 525 536 538,R516 523 535 535,R493 525 526 534,B509 525 532 543,B532 535 539 544,R533 538 544 569,R492 525 541 551
R442 468 521 538,B454 454 513 522,B497 510 514 521,R464 496 518 523,B462 486 489 514,B488 494 535 538,B533 534 559 566,R525 544 562 562,R512 544 548 553,R533 537 546 548
B530 539 554 555,R525 534 553 557,B533 534 539 548,B534 538 548 549,R521 533 553 557,B437 533 545 546,B540 543 557 567,R545 555 561 562,R539 548 557 562,B546 549 558 583
B552 552 573 580,R561 566 572 577,B561 564 575 590,R551 560 575 576,R547 559 561 565,R551 561 564 566,R543 551 562 566,B550 552 576 577,R557 575 578 582,B571 575 576 598
B564 568 585 586,B569 570 599 603,B589 597 613 617,R562 586 613 613,R568 577 589 589,R560 569 581 586,R538 546 568 568,R474 485 547 557,R287 338 477 484,R185 185 342 382`
  .split(/[,\n]/).map(s => ({ up: s[0] === 'R', v: s.slice(1).split(' ').map(Number) }));

const averages = [
  ['#4a9a00', '188,407 194,410 201,412 207,414 210,412 214,417 220,424 226,425 233,427 240,430 246,427 252,423 259,419 265,419 271,418 278,424 284,426 291,430 297,434 304,430 311,428 317,423 322,419 329,407 337,402 348,399 354,394 361,399 367,401 373,386 380,377 387,367 393,361 400,352 405,362 410,373 417,377 424,374 431,346 438,327 445,319 451,314 457,310 463,333 470,336 476,341 483,345 489,358 495,382 501,401 508,413 514,421 521,435 526,441 532,453 537,464 544,477 551,485 559,488 566,482 572,476 578,471 585,462 592,462 599,458 605,453 612,454 624,454 631,458 637,463 644,469 650,477 656,482 663,485 668,475 675,461 681,448 687,437 694,428 701,431 708,430 722,430 730,437 736,442 743,449 750,453 759,462 765,462 771,475 776,492 783,508 790,523 796,535 803,539 809,530 816,526 822,521 828,517 835,521 843,528 849,537 857,545 865,555 873,568 882,576 890,579 896,577 904,569 910,564 916,560 922,555 930,552 942,553 950,557 962,560 968,557 975,551 980,545 986,536 992,529 1000,527 1008,531 1015,530 1021,521 1027,516 1033,511 1039,504 1046,496 1052,505 1059,517 1065,525 1072,535 1078,544 1085,547 1091,543 1098,541 1111,541 1124,542 1136,547 1143,552 1150,557 1158,562 1165,566 1175,566 1184,562 1196,563 1202,567 1213,573 1219,581 1226,588 1238,591 1246,588 1251,580 1256,568 1261,536 1264,505 1267,480 1270,426'],
  ['#4848ff', '188,391 194,400 201,403 208,409 215,414 221,417 228,419 235,421 241,424 247,422 259,424 270,423 281,425 291,424 297,427 304,424 313,426 322,420 331,416 337,409 344,404 352,402 361,404 368,402 374,392 380,386 387,381 393,379 400,375 412,374 420,374 426,366 431,345 450,345 457,342 463,336 470,331 483,329 489,336 495,357 502,368 515,387 522,401 529,418 536,434 544,446 552,461 561,466 572,474 593,474 600,470 611,462 620,457 636,456 647,462 656,468 662,470 668,467 681,462 690,460 700,454 711,444 719,434 726,429 734,432 745,440 757,446 765,452 771,460 779,474 787,485 796,500 809,510 819,519 830,531 845,530 861,533 868,542 878,553 888,563 900,567 920,568 930,564 940,558 950,558 962,557 972,553 980,548 992,542 1002,541 1008,538 1015,531 1021,525 1030,521 1041,516 1046,514 1052,514 1062,516 1078,519 1085,529 1095,534 1106,542 1118,543 1143,547 1153,553 1170,558 1178,560 1194,561 1202,563 1214,568 1222,573 1234,579 1252,580 1259,572 1263,558 1266,540 1270,508'],
  ['#f00000', '188,397 205,401 215,405 226,410 243,411 256,408 265,410 273,413 281,419 291,422 304,424 315,422 335,421 343,419 353,413 372,414 383,405 390,403 400,399 412,392 420,388 426,383 434,371 442,367 454,362 463,358 472,353 485,351 495,353 505,361 520,369 534,378 550,393 560,408 570,421 580,430 590,439 602,451 612,460 622,463 640,466 650,469 660,471 670,468 685,461 700,454 713,453 726,450 750,451 773,451 780,454 790,460 800,470 810,478 830,492 845,504 858,516 872,529 884,540 892,544 900,548 915,547 922,550 935,551 946,554 953,559 970,560 985,558 996,553 1010,549 1022,540 1032,535 1045,530 1060,530 1073,527 1100,527 1120,529 1140,532 1150,539 1160,544 1175,552 1190,552 1205,555 1215,558 1225,564 1240,569 1255,570 1262,562 1267,548 1270,539'],
  ['#0000c8', '188,420 205,414 220,412 233,410 243,407 255,401 275,400 310,401 325,407 338,411 360,414 380,413 400,411 415,404 425,402 433,399 455,395 475,393 514,393 525,395 537,399 555,402 580,406 625,409 645,412 665,415 690,415 725,417 740,419 755,422 765,426 780,432 790,437 805,444 825,457 845,467 865,478 880,484 900,491 935,496 960,502 985,506 1000,509 1020,512 1045,514 1060,517 1085,525 1115,534 1145,541 1180,543 1210,547 1230,551 1255,551 1263,546 1270,539'],
  ['#7a1048', '188,464 205,460 235,452 255,449 300,449 320,448 350,444 370,438 400,430 420,426 440,419 460,415 485,413 527,411 560,413 590,411 620,409 655,407 685,408 710,412 750,418 785,424 820,424 850,429 885,438 915,445 960,453 1000,460 1040,465 1090,471 1130,478 1180,490 1200,496 1230,507 1255,514 1270,513'],
  ['#ff4040', '886,457 922,459 960,459 1000,456 1050,457 1095,460 1135,460 1190,459 1225,462 1250,463 1270,463'],
];

const price = pane('price', 185, 99);
YEARS.forEach(x => box(price, x, 99, 1, 568, GRID));
[183, 273, 363, 453, 543, 634].forEach(y => box(price, 185, y, 1130, 1, GRID));

// Volume-by-price bands
[[185, 679, 46, '#4897c5', '11.96% (61,280,393)'], [317, 1255, 41, '#e5929a', '25.90% (132,682,425)'],
 [360, 499, 41, '#c4c4c4', '7.60% (38,911,432)'], [403, 949, 40, '#c4c4c4', '18.50% (94,756,506)'],
 [445, 700, 41, '#c4c4c4', '12.48% (63,959,610)'], [488, 634, 41, '#c4c4c4', '10.88% (55,744,082)'],
 [531, 614, 41, '#c4c4c4', '10.39% (53,233,744)'], [574, 279, 40, '#c4c4c4', '']].forEach(([y, x, h, fill, label]) => {
  box(price, 185, y - 2, x - 185, h + 4, '#fff');
  box(price, 185, y, x - 185, h, fill);
  text(price, x, y + (h === 46 ? 26 : 24), label, '#000', 'end');
});
text(price, 189, 598, '2.29% (11,735,583)');
[[254, 409], [587, 429], [920, 547]].forEach(([x, y]) => {
  text(price, x, y, '배당락', '#000', 'start', 'ko');
  text(price, x + 36, y, '(0%)');
});
[[285, 410, 423], [617, 430, 443], [950, 549, 562]].forEach(([x, top, y]) => {
  box(price, x, top, 1, y - top, '#f00');
  add(price, 'path', { d: `M${x - 5} ${y}h11l-5.500 6z`, fill: '#f00' });
});

candles.forEach(({ up, v: [high, top, bottom, low] }, i) => {
  const x = barX(i), fill = up ? RED : BLUE;
  box(price, x, high, 1, low - high, fill);
  box(price, x - 3, top, i === 169 ? 5 : 6, Math.max(1, bottom - top), fill);
});
averages.forEach(([stroke, points]) => line(price, points, stroke));

box(price, 185, 230, 1130, 2, '#00f');
add(price, 'rect', { x: 747.5, y: 228.5, width: 6, height: 6, fill: '#fff', stroke: '#00f' });
box(price, 1311, 185, 3, 167, RED);
box(price, 1311, 352, 3, 165, BLUE);

[[375, 241, '7,280'], [668, 313, '6,480'], [585, 399, '5,520'], [848, 481, '4,615'], [931, 509, '4,300'], [1021, 435, '5,130'], [1117, 430, '5,180'], [1270, 178, '7,980']]
  .forEach(([x, y, s]) => text(price, x, y, s, '#e00000', 'start', 'mark'));
[[297, 476, '4,900'], [540, 540, '4,190'], [643, 526, '4,350'], [777, 594, '3,590'], [880, 625, '3,255'], [950, 598, '3,555'], [1059, 579, '3,765'], [1226, 630, '3,190']]
  .forEach(([x, y, s]) => text(price, x, y, s, '#0000e0', 'start', 'mark'));
line(price, '459,124 440,124 444,121 440,124 444,127', RED);
text(price, 460, 128, '최고', RED, 'start', 'ko');
text(price, 490, 128, '8,400(2021/06/14,  -5.00%)', RED);
text(price, 1012, 642, '최저', BLUE, 'start', 'ko');
text(price, 1042, 642, '3,190(2023/10/23,  +150.16%)', BLUE);
line(price, '1205,638 1225,638 1221,635 1225,638 1221,641', BLUE);

const priceAxis = pane('price-axis', 1315, 99);
for (let y = 147; y < 660; y += 18) box(priceAxis, 1315, y, 2, 1, '#bbb');
[[273, '7,000'], [363, '6,000'], [453, '5,000'], [543, '4,000'], [634, '3,000']].forEach(([y, s]) => {
  box(priceAxis, 1315, y, 4, 1, '#bbb');
  text(priceAxis, 1325, y + 4, s);
});
add(priceAxis, 'path', { d: 'M1314 185l5-5v11z', fill: '#e00' });
box(priceAxis, 1322, 177, 50, 28, '#f00');
text(priceAxis, 1323, 189, '7,980', '#fff');
text(priceAxis, 1323, 203, '(29.97%)', '#fff');
add(priceAxis, 'rect', { x: 1315.5, y: 223.5, width: 34, height: 15, fill: '#e0ffe0', stroke: '#000' });
text(priceAxis, 1317, 236, '7,470');

const volume = pane('volume', 185, 671);
YEARS.forEach(x => box(volume, x, 672, 1, 54, GRID));
[690, 707].forEach(y => box(volume, 185, y, 1130, 1, GRID));
const peaks = { 18: 10, 22: 4, 24: 4, 27: 4, 29: 27, 30: 6, 31: 5, 32: 4, 37: 6, 38: 23, 39: 12, 40: 5, 41: 4, 75: 26, 76: 5, 77: 6, 78: 4, 79: 4, 80: 4, 81: 3, 103: 4, 118: 4, 120: 5, 130: 33, 131: 7, 132: 4, 133: 5, 134: 6, 135: 4, 145: 8, 146: 4, 162: 4, 167: 13, 168: 37, 169: 22 };
candles.forEach((c, i) => {
  const h = peaks[i] || (i % 5 ? 2 : 3);
  box(volume, barX(i) - 3, 726 - h, 5, h, c.up && i !== 169 ? RED : BLUE);
});
line(volume, '188,725 300,724 303,722 340,722 345,723 368,722 375,718 400,717 404,721 425,721 432,718 445,716 455,717 464,723 510,724 660,724 668,720 680,718 691,717 698,722 720,724 1015,724 1022,718 1045,715 1053,722 1100,724 1115,722 1250,724 1258,720 1265,714 1270,711', '#4a9a00');
line(volume, '188,722 300,723 373,721 495,720 520,722 665,724 740,724 1015,724 1040,721 1140,721 1150,724 1250,724 1270,721', '#1080d8');
line(volume, '188,723 374,722 666,722 820,723 1020,723 1255,723 1270,722', '#0000c8');
line(volume, '188,724 430,723 530,723 670,722 815,722 1020,723 1270,723', '#7a1048');
const volumeAxis = pane('volume-axis', 1315, 671);
[690, 707, 725].forEach(y => box(volumeAxis, 1315, y, 4, 1, '#bbb'));
[699, 716].forEach(y => box(volumeAxis, 1315, y, 2, 1, '#bbb'));
[[694, '50,000K'], [711, '25,000K'], [724, '0K']].forEach(([y, s]) => text(volumeAxis, 1367, y, s, '#000', 'end'));

const macd = pane('macd', 185, 728);
YEARS.forEach(x => box(macd, x, 729, 1, 70, GRID));
box(macd, 185, 747, 1130, 1, GRID);
box(macd, 185, 776, 1127, 1, '#ff96c8');
const osc = [-1, -3, -3, -3, -2, -3, -3, -3, -3, -3, -2, -2, -2, -2, -2, -1, -2, -3, -2, 0,
  0, 1, 1, 2, 2, 2, 3, 3, 2, 4, 5, 5, 5, 3, 2, 1, 0, 1, 7, 6,
  3, 2, 1, 0, 0, -2, -3, -6, -9, -9, -9, -10, -10, -9, -11, -11, -10, -8, -6, -5,
  -4, -1, 0, 1, 1, 2, 2, 3, 2, 2, 2, 0, 0, -1, -1, 3, 4, 4, 5, 5,
  4, 4, 4, 3, 3, 2, -1, -1, -2, -2, -2, -3, -7, -7, -7, -7, -6, -4, -3, -2,
  -1, -1, -2, -2, -2, -2, -3, -3, -3, -3, -2, -1, 1, 1, 2, 3, 3, 3, 3, 1,
  2, 3, 3, 4, 4, 4, 4, 3, 2, 2, 5, 4, 3, 3, 4, 1, -1, -2, -3, -3,
  -4, -3, -3, -3, -2, -2, -2, -2, -3, -3, -3, -4, -4, -3, -3, -2, -2, -2, -2, -2,
  -2, -3, -4, -3, -2, 0, 1, 5, 13, 24];
osc.forEach((v, i) => v && (v > 0
  ? box(macd, barX(i) - 3, 776 - v, 5, v + 1, '#ff96c8')
  : box(macd, barX(i) - 3, 776, 5, 1 - v, '#96c8ff')));
line(macd, '188,774 200,776 212,777 226,780 243,780 265,779 285,780 298,782 315,780 330,777 345,774 353,772 367,774 375,770 385,767 400,766 415,768 425,767 431,762 438,759 448,761 460,763 475,763 484,768 495,777 508,782 520,785 533,792 546,796 560,796 573,795 580,792 597,790 610,787 625,785 650,786 660,787 668,782 680,779 692,776 705,775 725,773 735,776 750,778 765,780 773,786 790,791 805,791 815,789 835,789 855,791 865,793 880,794 895,792 910,789 930,785 950,785 965,781 985,777 1005,776 1022,771 1047,769 1060,773 1075,775 1120,778 1145,781 1165,783 1180,781 1210,782 1225,786 1240,785 1252,782 1260,773 1266,762 1270,749', '#ff6600');
line(macd, '188,773 205,775 225,779 265,779 300,780 320,777 345,776 370,774 385,771 400,769 425,768 440,765 455,764 480,763 500,769 520,776 540,783 560,790 575,792 595,792 610,789 630,787 660,787 680,784 705,779 720,777 750,776 765,777 785,783 805,787 830,788 860,791 910,792 930,788 970,785 990,781 1020,777 1050,773 1075,774 1105,777 1140,779 1180,781 1215,782 1250,784 1260,780 1268,775', '#2f68ff');
const macdAxis = pane('macd-axis', 1315, 728);
[747, 776].forEach(y => box(macdAxis, 1315, y, 4, 1, '#bbb'));
[753, 759, 765, 770].forEach(y => box(macdAxis, 1315, y, 2, 1, '#bbb'));
text(macdAxis, 1361, 751, '500.00', '#000', 'end');
text(macdAxis, 1361, 780, '0.00', '#000', 'end');

const dates = pane('dates', 185, 802);
YEARS.forEach(x => box(dates, x, 802, 1, 6, '#bbb'));
['2020/09', '2021/01', '2022/01', '2023/01'].forEach((s, i) => text(dates, YEARS[i] + 1, 814, s));
```
